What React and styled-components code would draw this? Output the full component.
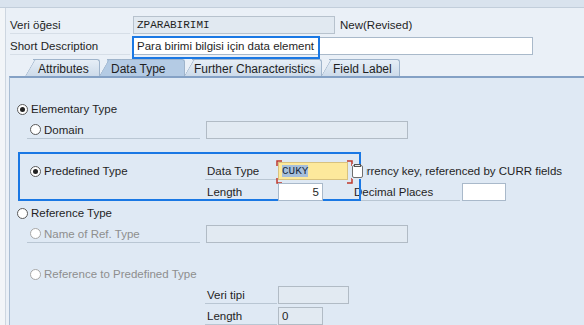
import React from 'react';
import styled, { createGlobalStyle, css } from 'styled-components';

const GlobalStyle = createGlobalStyle`
  html, body { margin: 0; padding: 0; }
  body {
    width: 584px;
    height: 325px;
    overflow: hidden;
    background: #f2f5f8;
    font-family: "Liberation Sans", Arial, sans-serif;
    font-size: 11.5px;
    color: #1f1f1f;
  }
`;

const Page = styled.div`
  width: 584px;
  height: 325px;
  display: flex;
  flex-direction: column;
`;

const TopStrip = styled.div`
  height: 7px;
  background: #d9e3ee;
  border-bottom: 1px solid #c2cedb;
`;

const Frame = styled.div`
  flex: 1;
  margin-left: 5px;
  border-left: 1px solid #cdd6e0;
  background: #eaf0f7;
  display: flex;
  flex-direction: column;
  min-height: 0;
`;

const Header = styled.div`
  padding: 8px 0 0 4px;
`;

const HeaderRow = styled.div`
  display: grid;
  grid-template-columns: 123px auto 1fr;
  align-items: center;
  height: 18px;
  margin-bottom: 3px;
`;

const HeaderLabel = styled.div`
  height: 18px;
  line-height: 18px;
  border-bottom: 1px solid #d6dee7;
  box-sizing: border-box;
  margin-right: 3px;
  white-space: nowrap;
`;

const Field = styled.div`
  position: relative;
  box-sizing: border-box;
  width: ${(p) => p.w}px;
  height: 18px;
  line-height: 16px;
  padding: 0 3px;
  white-space: nowrap;
  overflow: visible;
  text-align: ${(p) => (p.right ? 'right' : 'left')};
  ${(p) =>
    p.mono &&
    css`
      font-family: "Liberation Mono", "Courier New", monospace;
      font-size: 11px;
    `}
  ${(p) =>
    p.kind === 'ro'
      ? css`
          background: #e1e9f1;
          border: 1px solid #b7c2cd;
        `
      : p.kind === 'dis'
      ? css`
          background: #e2eaf2;
          border: 1px solid #b1bbc5;
        `
      : p.kind === 'focus'
      ? css`
          background: #fde99c;
          border: 1px solid #d8c27f;
        `
      : css`
          background: #ffffff;
          border: 1px solid #a9b9ca;
        `}
`;

const Status = styled.span`
  margin-left: 5px;
`;

const Highlight = styled.div`
  position: absolute;
  box-sizing: border-box;
  border: 2px solid #1a78e4;
  pointer-events: none;
  left: ${(p) => p.l}px;
  top: ${(p) => p.t}px;
  width: ${(p) => p.w}px;
  height: ${(p) => p.h}px;
`;

const Notebook = styled.div`
  flex: 1;
  margin-left: 3px;
  display: flex;
  flex-direction: column;
  min-height: 0;
`;

const TabBar = styled.div`
  display: flex;
  align-items: flex-end;
  height: 17px;
  margin-top: 1px;
  padding-left: 24px;
  gap: 7px;
`;

const Tab = styled.div`
  position: relative;
  box-sizing: border-box;
  width: ${(p) => p.w}px;
  height: 17px;
  line-height: 18px;
  padding-left: ${(p) => p.pl}px;
  white-space: nowrap;
  color: #1f1f1f;
  border-top: 1px solid #9fb4cb;
  border-right: 1px solid #9fb4cb;
  border-top-right-radius: 3px;
  background: ${(p) => (p.active ? '#b4cbe4' : 'linear-gradient(#e6eef6, #cddbea)')};
  z-index: ${(p) => (p.active ? 2 : 1)};

  &::before {
    content: '';
    position: absolute;
    top: -1px;
    bottom: 0;
    left: -8px;
    width: 12px;
    background: ${(p) => (p.active ? '#b4cbe4' : 'linear-gradient(#e6eef6, #cddbea)')};
    border-top: 1px solid #9fb4cb;
    border-left: 1px solid #9fb4cb;
    border-top-left-radius: 2px;
    transform: skewX(-30deg);
    transform-origin: bottom left;
    z-index: -1;
  }
`;

const TabText = styled.span`
  position: relative;
  font-size: 12px;
`;

const Panel = styled.div`
  position: relative;
  flex: 1;
  background: #dfe9f4;
  border-top: 2px solid #84a1c5;
  border-left: 1px solid #a9bdd3;
  padding-top: 22px;
`;

const Row = styled.div`
  display: grid;
  grid-template-columns: 195px 73px 74px 110px 1fr;
  align-items: center;
  height: 18px;
  margin-bottom: 3px;
`;

const Spacer = styled.div`
  height: ${(p) => p.h}px;
`;

const Choice = styled.div`
  grid-column: 1;
  display: flex;
  align-items: center;
  gap: 3px;
  height: 18px;
  box-sizing: border-box;
  margin-left: ${(p) => (p.sub ? 17 : 7)}px;
  margin-right: 5px;
  padding-left: ${(p) => (p.sub ? 3 : 0)}px;
  color: ${(p) => (p.disabled ? '#8e8e8e' : '#1f1f1f')};
  white-space: nowrap;
  ${(p) =>
    p.line &&
    css`
      border-bottom: 1px solid #b9c6d3;
    `}
`;

const Radio = styled.span`
  box-sizing: border-box;
  width: 11px;
  height: 11px;
  flex: none;
  border-radius: 50%;
  background: #fff;
  border: 1px solid ${(p) => (p.disabled ? '#a7a7a7' : '#5a5a5a')};
  display: flex;
  align-items: center;
  justify-content: center;

  &::after {
    content: '';
    display: ${(p) => (p.checked ? 'block' : 'none')};
    width: 5px;
    height: 5px;
    border-radius: 50%;
    background: #222;
  }
`;

const FieldLabel = styled.div`
  grid-column: ${(p) => p.col};
  height: 18px;
  line-height: 18px;
  box-sizing: border-box;
  padding-left: 2px;
  margin-right: ${(p) => p.mr || 1}px;
  border-bottom: 1px solid #b9c6d3;
  white-space: nowrap;
`;

const Cell = styled.div`
  grid-column: ${(p) => p.col};
  margin-left: ${(p) => p.ml || 0}px;
  position: relative;
  white-space: nowrap;
`;

const Selected = styled.span`
  background: #a6bfdb;
  color: #1a2a3e;
`;

const Corners = styled.svg`
  position: absolute;
  left: -3px;
  top: -3px;
  pointer-events: none;
`;

const HelpText = styled.div`
  position: relative;
  line-height: 18px;
`;

const F4Button = styled.span`
  position: absolute;
  left: 0;
  top: 2px;
  width: 14px;
  height: 15px;
  background: #dfe9f4;

  &::before {
    content: '';
    position: absolute;
    left: 0;
    top: 1px;
    width: 11px;
    height: 13px;
    box-sizing: border-box;
    background: #fff;
    border: 1px solid #6f6f6f;
    border-radius: 2px;
  }

  &::after {
    content: '';
    position: absolute;
    left: 2px;
    top: 0;
    width: 7px;
    height: 3px;
    box-sizing: border-box;
    background: #e9e9e9;
    border: 1px solid #555;
  }
`;

const FocusCorners = () => (
  <Corners width="77" height="24" viewBox="0 0 77 24">
    <g fill="none" stroke="#c0392b" strokeWidth="1.5">
      <path d="M1 6V1h5" />
      <path d="M71 1h5v5" />
      <path d="M1 18v5h5" />
      <path d="M76 18v5h-5" />
    </g>
  </Corners>
);

const tabs = [
  { label: 'Attributes', w: 67, pl: 5 },
  { label: 'Data Type', w: 78, pl: 4, active: true },
  { label: 'Further Characteristics', w: 130, pl: 2 },
  { label: 'Field Label', w: 71, pl: 4 },
];

export default function App() {
  return (
    <Page>
      <GlobalStyle />
      <TopStrip />
      <Frame>
        <Header>
          <HeaderRow>
            <HeaderLabel>Veri öğesi</HeaderLabel>
            <Field w={202} kind="ro" mono>
              ZPARABIRIMI
            </Field>
            <Status>New(Revised)</Status>
          </HeaderRow>
          <HeaderRow>
            <HeaderLabel>Short Description</HeaderLabel>
            <Field w={400}>
              Para birimi bilgisi için data element
              <Highlight l={-2} t={-2} w={188} h={23} />
            </Field>
          </HeaderRow>
        </Header>

        <Notebook>
          <TabBar>
            {tabs.map((t) => (
              <Tab key={t.label} w={t.w} pl={t.pl} active={t.active}>
                <TabText>{t.label}</TabText>
              </Tab>
            ))}
          </TabBar>

          <Panel>
            <Highlight l={8} t={74} w={343} h={49} />

            <Row>
              <Choice>
                <Radio checked />
                Elementary Type
              </Choice>
            </Row>
            <Row>
              <Choice sub line>
                <Radio />
                Domain
              </Choice>
              <Cell col="2 / span 3" ml={1}>
                <Field w={202} kind="dis" />
              </Cell>
            </Row>
            <Spacer h={20} />
            <Row>
              <Choice sub>
                <Radio checked />
                Predefined Type
              </Choice>
              <FieldLabel col={2}>Data Type</FieldLabel>
              <Cell col={3}>
                <Field w={70} kind="focus" mono>
                  <Selected>CUKY</Selected>
                  <FocusCorners />
                </Field>
              </Cell>
              <Cell col="4 / span 2">
                <HelpText>
                  Currency key, referenced by CURR fields
                  <F4Button />
                </HelpText>
              </Cell>
            </Row>
            <Row>
              <FieldLabel col={2}>Length</FieldLabel>
              <Cell col={3}>
                <Field w={45} right>
                  5
                </Field>
              </Cell>
              <FieldLabel col={4} mr={2}>
                Decimal Places
              </FieldLabel>
              <Cell col={5}>
                <Field w={44} />
              </Cell>
            </Row>
            <Row>
              <Choice>
                <Radio />
                Reference Type
              </Choice>
            </Row>
            <Row>
              <Choice sub line disabled>
                <Radio disabled />
                Name of Ref. Type
              </Choice>
              <Cell col="2 / span 3" ml={1}>
                <Field w={202} kind="dis" />
              </Cell>
            </Row>
            <Spacer h={19} />
            <Row>
              <Choice sub disabled>
                <Radio disabled />
                Reference to Predefined Type
              </Choice>
            </Row>
            <Row>
              <FieldLabel col={2}>Veri tipi</FieldLabel>
              <Cell col={3}>
                <Field w={71} kind="dis" />
              </Cell>
            </Row>
            <Row>
              <FieldLabel col={2}>Length</FieldLabel>
              <Cell col={3}>
                <Field w={45} kind="dis">
                  0
                </Field>
              </Cell>
            </Row>
          </Panel>
        </Notebook>
      </Frame>
    </Page>
  );
}
